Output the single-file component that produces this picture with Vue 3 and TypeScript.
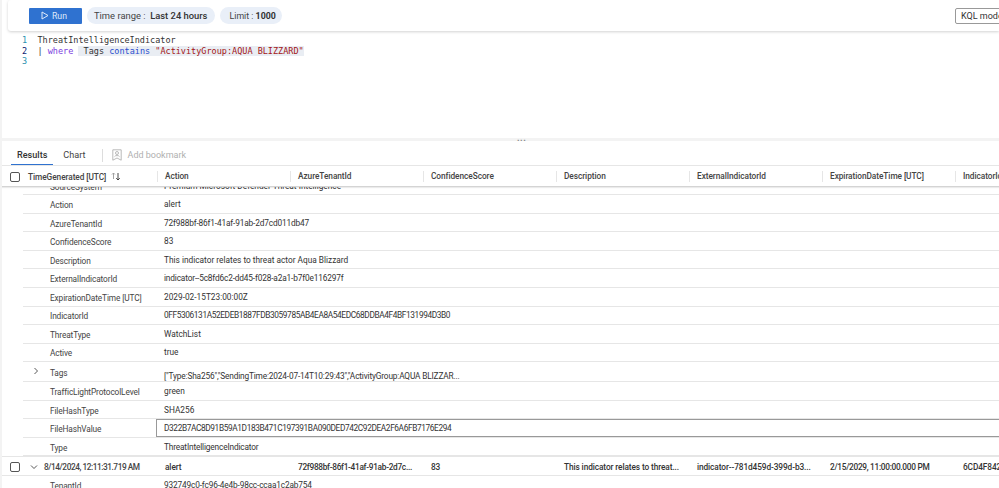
<script setup lang="ts">
interface Detail { key: string; value: string; expand?: boolean; focus?: boolean; fit?: string }
const columns: string[] = ['Action', 'AzureTenantId', 'ConfidenceScore', 'Description', 'ExternalIndicatorId', 'ExpirationDateTime [UTC]', 'IndicatorId']
const details: Detail[] = [
  { key: 'Action', value: 'alert' },
  { key: 'AzureTenantId', value: '72f988bf-86f1-41af-91ab-2d7cd011db47', fit: 'slim' },
  { key: 'ConfidenceScore', value: '83' },
  { key: 'Description', value: 'This indicator relates to threat actor Aqua Blizzard' },
  { key: 'ExternalIndicatorId', value: 'indicator--5c8fd6c2-dd45-f028-a2a1-b7f0e116297f', fit: 'slim' },
  { key: 'ExpirationDateTime [UTC]', value: '2029-02-15T23:00:00Z' },
  { key: 'IndicatorId', value: '0FF5306131A52EDEB1887FDB3059785AB4EA8A54EDC68DDBA4F4BF131994D3B0', fit: 'hex' },
  { key: 'ThreatType', value: 'WatchList' },
  { key: 'Active', value: 'true' },
  { key: 'Tags', value: '["Type:Sha256","SendingTime:2024-07-14T10:29:43","ActivityGroup:AQUA BLIZZAR...', expand: true, fit: 'slim' },
  { key: 'TrafficLightProtocolLevel', value: 'green' },
  { key: 'FileHashType', value: 'SHA256' },
  { key: 'FileHashValue', value: 'D322B7AC8D91B59A1D183B471C197391BA090DED742C92DEA2F6A6FB7176E294', focus: true, fit: 'hex' },
  { key: 'Type', value: 'ThreatIntelligenceIndicator', fit: 'slim' }
]
const mainCells: string[] = ['alert', '72f988bf-86f1-41af-91ab-2d7c...', '83', 'This indicator relates to threat...', 'indicator--781d459d-399d-b3...', '2/15/2029, 11:00:00.000 PM', '6CD4F842']
</script>

<template>
  <div class="page">
    <header class="toolbar">
      <button class="run">
        <svg width="8" height="9" viewBox="0 0 8 9"><path d="M1 1 L7 4.5 L1 8 Z" fill="none" stroke="#dfe9fa" stroke-width="1"/></svg>
        <span>Run</span>
      </button>
      <div class="pill time">Time range :&nbsp;&nbsp;<b>Last 24 hours</b></div>
      <div class="pill limit">Limit :&nbsp;<b>1000</b></div>
      <div class="mode">KQL mode</div>
    </header>

    <section class="editor">
      <div class="line"><span class="num">1</span><span class="dark">ThreatIntelligenceIndicator</span></div>
      <div class="line"><span class="num active">2</span><span class="pipe">|&nbsp;</span><span class="kw">where</span>&nbsp;<span class="hl">&nbsp;<span class="dark">Tags</span>&nbsp;<span class="op">contains</span>&nbsp;<span class="str">"ActivityGroup:AQUA BLIZZARD"</span></span></div>
      <div class="line"><span class="num">3</span></div>
    </section>

    <div class="splitter"><span class="dots">...</span></div>

    <nav class="tabs">
      <span class="tab on">Results</span>
      <span class="tab">Chart</span>
      <span class="tabsep"></span>
      <span class="bookmark">
        <svg width="10" height="12" viewBox="0 0 10 12" fill="none" stroke="#a8a8a8" stroke-width=".8"><path d="M.8 .8 H9.2 V11.2 L5 9 L.8 11.2 Z"/><circle cx="5" cy="4" r="1.5"/><path d="M2.5 7.6 C3 6.2 7 6.2 7.5 7.6"/></svg>
        Add bookmark
      </span>
    </nav>

    <div class="thead">
      <div class="firstcol">
        <span class="check"></span>
        <span class="hname">TimeGenerated [UTC]</span>
        <svg class="sort" width="10" height="9" viewBox="0 0 10 9" fill="none" stroke-width=".9"><path d="M2.5 7 V1 M1 2.5 L2.5 1 L4 2.5" stroke="#999"/><path d="M7 1 V8 M5.2 6.2 L7 8 L8.8 6.2" stroke="#333"/></svg>
      </div>
      <div v-for="c in columns" :key="c" class="hcell">{{ c }}</div>
    </div>

    <div class="tbody">
      <div class="drow clipped"><span class="dkey">SourceSystem</span><span class="dval">Premium Microsoft Defender Threat Intelligence</span></div>
      <div v-for="d in details" :key="d.key" class="drow" :class="{ tall: d.expand }">
        <svg v-if="d.expand" class="chev" width="6" height="8" viewBox="0 0 6 8" fill="none" stroke="#444" stroke-width=".9"><path d="M1.5 1 L4.5 4 L1.5 7"/></svg>
        <span class="dkey">{{ d.key }}</span>
        <span class="dval" :class="[d.fit, { focus: d.focus }]">{{ d.value }}</span>
      </div>
      <div class="mrow">
        <div class="firstcol main">
          <span class="check"></span>
          <svg class="chevd" width="8" height="6" viewBox="0 0 8 6" fill="none" stroke="#444" stroke-width=".9"><path d="M1 1.5 L4 4.5 L7 1.5"/></svg>
          <span class="date">8/14/2024, 12:11:31.719 AM</span>
        </div>
        <div v-for="(m, i) in mainCells" :key="i" class="mcell">{{ m }}</div>
      </div>
      <div class="drow"><span class="dkey">TenantId</span><span class="dval slim">932749c0-fc96-4e4b-98cc-ccaa1c2ab754</span></div>
    </div>
  </div>
</template>

<style>
html, body { margin: 0; background: #fff; }
</style>

<style scoped>
.page {
  width: 999px;
  height: 488px;
  overflow: hidden;
  display: flex;
  flex-direction: column;
  font-family: Roboto, "Open Sans", sans-serif;
  font-size: 8.3px;
  color: #3a3a3a;
  background: #fff;
  border-left: 2px solid #f3f3f3;
  box-sizing: border-box;
}
.toolbar {
  flex: 0 0 31px;
  box-sizing: border-box;
  margin-left: 6px;
  display: flex;
  align-items: center;
  padding-left: 21px;
  border-radius: 3px 0 0 3px;
  box-shadow: 0 1px 3px rgba(0, 0, 0, .18);
  overflow: hidden;
  position: relative;
  z-index: 1;
}
.run {
  width: 53px;
  height: 16px;
  padding: 0 0 0 12px;
  border: 0;
  border-radius: 1px;
  background: #2f72d0;
  color: #dfe9fa;
  display: flex;
  align-items: center;
  gap: 3px;
  font: inherit;
  font-size: 8.7px;
}
.pill {
  height: 17px;
  box-sizing: border-box;
  border-radius: 9px;
  background: #e9eff8;
  display: flex;
  align-items: center;
  white-space: pre;
  color: #444;
}
.pill b { font-weight: 500; color: #333; }
.time { width: 128px; margin-left: 5px; padding-left: 7px; font-size: 9.4px; }
.limit { width: 62px; margin-left: 5px; padding-left: 9.5px; font-size: 8.8px; }
.limit b { font-weight: 700; }
.mode {
  margin-left: auto;
  margin-right: -16px;
  width: 60px;
  flex: none;
  height: 16px;
  box-sizing: border-box;
  border: 1px solid #999;
  border-radius: 2px;
  padding-left: 5px;
  display: flex;
  align-items: center;
  color: #333;
  font-size: 9px;
}
.editor {
  flex: 0 0 107px;
  box-sizing: border-box;
  padding-top: 4px;
  font-family: "DejaVu Sans Mono", "Liberation Mono", monospace;
  font-size: 8.5px;
}
.line { height: 10.6px; line-height: 10.6px; white-space: pre; color: #333; }
.num { display: inline-block; width: 35.5px; padding-left: 20px; box-sizing: border-box; color: #2b91af; }
.num.active { color: #0b216f; }
.dark { color: #333; }
.pipe { color: #333; }
.kw { color: #7a3ee0; }
.op { color: #2a4fd0; }
.str { color: #a31515; }
.hl { background: #e9edf3; }
.splitter {
  flex: 0 0 3px;
  background: #f3f3f3;
  position: relative;
}
.dots {
  position: absolute;
  left: 515px;
  top: -4px;
  font-size: 9px;
  font-weight: 700;
  color: #888;
  letter-spacing: .5px;
  line-height: 8px;
}
.tabs {
  flex: 0 0 24px;
  box-sizing: border-box;
  display: flex;
  align-items: flex-end;
  padding: 0 0 0 9px;
  font-size: 9.1px;
}
.tab { padding: 0 6px 1px; height: 19px; display: flex; align-items: center; box-sizing: border-box; color: #444; margin-right: 3px; }
.tab.on { border-bottom: 1px solid #2f72d0; padding-bottom: 0; color: #333; font-weight: 500; margin-right: 4px; }
.tabsep { width: 1px; height: 13px; background: #ddd; margin: 0 9px 3px 7px; }
.bookmark { display: flex; align-items: center; gap: 6px; color: #b0b0b0; font-size: 9px; height: 19px; padding-bottom: 1px; box-sizing: border-box; }
.thead {
  flex: 0 0 22px;
  box-sizing: border-box;
  display: flex;
  border-top: 1px solid #e6e6e6;
  border-bottom: 1px solid #d4d4d4;
  box-shadow: 0 1px 1px rgba(0, 0, 0, .08);
  position: relative;
  z-index: 1;
  background: #fff;
  align-items: center;
  font-weight: 500;
  white-space: nowrap;
  letter-spacing: -.06px;
  padding-top: 1px;
}
.firstcol {
  width: 155px;
  flex: none;
  display: flex;
  align-items: center;
  box-sizing: border-box;
  padding-left: 8px;
  color: #444;
}
.check {
  width: 10px;
  height: 10px;
  box-sizing: border-box;
  border: 1px solid #555;
  border-radius: 2px;
  flex: none;
}
.hname { margin-left: 8px; }
.sort { margin-left: 5px; }
.hcell, .mcell {
  width: 133px;
  flex: none;
  box-sizing: border-box;
  padding-left: 7px;
  overflow: hidden;
  white-space: nowrap;
}
.mcell { padding-left: 8px; letter-spacing: -.1px; }
.mcell:nth-child(3), .mcell:nth-child(7) { letter-spacing: -.3px; }
.hcell { border-left: 1px solid #e6e6e6; height: 11px; line-height: 11px; color: #444; }
.tbody { flex: 1; min-height: 0; overflow: hidden; }
.drow {
  height: 18.55px;
  box-sizing: border-box;
  margin-left: 21px;
  border-bottom: 1px solid #e6e6e6;
  display: flex;
  align-items: center;
  position: relative;
  white-space: nowrap;
}
.tall { height: 20px; }
.tall .dkey { transform: translateY(1px); }
.tall .dval { transform: translateY(4px); }
.clipped { height: 8.3px; align-items: flex-end; overflow: hidden; }
.clipped span { line-height: 9px; height: 9px; margin-bottom: 3px; flex: none; }
.dkey { width: 135px; padding-left: 27px; box-sizing: border-box; flex: none; color: #444; letter-spacing: -.12px; transform: translateY(1px); }
.dval { padding-left: 6px; color: #333; }
.slim { letter-spacing: -.16px; }
.hex { letter-spacing: -.38px; }
.chev { position: absolute; left: 10px; top: 5px; }
.focus {
  align-self: stretch;
  flex: 1;
  border: 1px solid #999;
  margin: 0 -2px 0 -2px;
  padding-left: 7px;
  display: flex;
  align-items: center;
}
.mrow {
  height: 19.5px;
  box-sizing: border-box;
  display: flex;
  align-items: center;
  border-top: 1px solid #e6e6e6;
  border-bottom: 1px solid #e6e6e6;
  font-weight: 500;
  white-space: nowrap;
  color: #333;
  padding-top: 1px;
}
.chevd { margin-left: 10px; flex: none; }
.date { margin-left: 6px; letter-spacing: -.45px; }
</style>
